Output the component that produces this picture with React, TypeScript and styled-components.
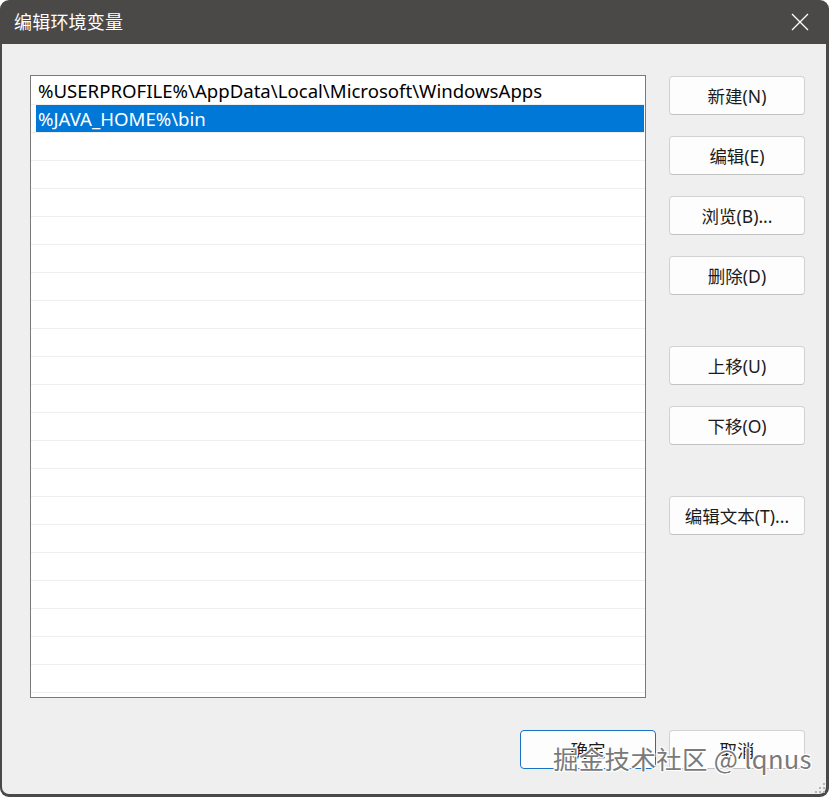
import React from 'react';
import styled, { createGlobalStyle } from 'styled-components';

const GlobalStyle = createGlobalStyle`
  html, body {
    margin: 0;
    padding: 0;
    background: #ffffff;
  }
  * {
    box-sizing: border-box;
  }
`;

const FONT = `"Noto Sans", "Noto Sans CJK SC", sans-serif`;

const paths = ['%USERPROFILE%\\AppData\\Local\\Microsoft\\WindowsApps', '%JAVA_HOME%\\bin'];
const TOTAL_ROWS = 22;

const Window = styled.div`
  position: relative;
  width: 829px;
  height: 797px;
  display: flex;
  flex-direction: column;
  background: #4b4947;
  border-radius: 9px;
  padding: 0 3px 3px 2px;
  overflow: hidden;
  font-family: ${FONT};
`;

const TitleBar = styled.div`
  height: 44px;
  display: flex;
  align-items: center;
  justify-content: space-between;
  padding: 0 17px 0 12px;
  color: #ffffff;
  font-size: 18px;
  flex-shrink: 0;
`;

const Title = styled.span`
  margin-top: -2px;
  letter-spacing: 0.2px;
`;

const CloseIcon = () => (
  <svg width="18" height="18" viewBox="0 0 18 18">
    <path d="M1 1 L17 17 M17 1 L1 17" stroke="#ffffff" strokeWidth="1.3" fill="none" />
  </svg>
);

const Body = styled.div`
  flex: 1;
  background: #efefef;
  border-radius: 0 0 7px 7px;
  display: flex;
  flex-direction: column;
  padding: 31px 21px 25px 28px;
`;

const Main = styled.div`
  display: flex;
  gap: 23px;
`;

const ListBox = styled.div`
  width: 616px;
  height: 623px;
  border: 1px solid #7a7a7a;
  background: #ffffff;
  padding-top: 1px;
  overflow: hidden;
`;

const Row = styled.div`
  height: 28px;
  border-bottom: 1px solid #efefef;
  padding: 0 1px 0 5px;
`;

const Item = styled.div<{ $selected?: boolean }>`
  height: 27px;
  line-height: 28px;
  padding-left: 2px;
  font-size: 18.6px;
  color: ${({ $selected }) => ($selected ? '#ffffff' : '#000000')};
  background: ${({ $selected }) => ($selected ? '#0078d7' : 'transparent')};
  white-space: nowrap;
  overflow: hidden;
`;

const ButtonColumn = styled.div`
  display: flex;
  flex-direction: column;
  padding-top: 1px;
`;

const Button = styled.div<{ $gap?: number; $primary?: boolean }>`
  width: 136px;
  height: 39px;
  margin-top: ${({ $gap }) => $gap ?? 0}px;
  display: flex;
  align-items: center;
  justify-content: center;
  background: #fdfdfd;
  border: 1px solid ${({ $primary }) => ($primary ? '#1a72c4' : '#d2d2d2')};
  border-bottom-color: ${({ $primary }) => ($primary ? '#1a72c4' : '#c2c2c2')};
  border-radius: 4px;
  font-size: 17.5px;
  color: #1b1b1b;
  padding-bottom: 1px;
`;

const Footer = styled.div`
  display: flex;
  justify-content: flex-end;
  gap: 13px;
  margin-top: 32px;
`;

const Grip = styled.svg`
  position: absolute;
  right: 4px;
  bottom: 4px;
`;

const Watermark = styled.div`
  position: absolute;
  left: 553px;
  top: 739px;
  font-family: "Noto Sans CJK SC", "Noto Sans", sans-serif;
  font-size: 25.5px;
  font-weight: 400;
  color: #7a7a7a;
  text-shadow: 1px 1px 0 #ffffff, -1px -1px 0 #ffffff, 1px -1px 0 #ffffff, -1px 1px 0 #ffffff,
    0 1px 0 #ffffff, 0 -1px 0 #ffffff;
  white-space: nowrap;
  pointer-events: none;
  letter-spacing: 0.3px;
`;

const sideButtons: { label: string; gap: number }[] = [
  { label: '新建(N)', gap: 0 },
  { label: '编辑(E)', gap: 21 },
  { label: '浏览(B)...', gap: 21 },
  { label: '删除(D)', gap: 21 },
  { label: '上移(U)', gap: 51 },
  { label: '下移(O)', gap: 21 },
  { label: '编辑文本(T)...', gap: 51 },
];

export default function App() {
  const rows = Array.from({ length: TOTAL_ROWS }, (_, i) => paths[i] ?? '');

  return (
    <>
      <GlobalStyle />
      <Window>
        <TitleBar>
          <Title>编辑环境变量</Title>
          <CloseIcon />
        </TitleBar>
        <Body>
          <Main>
            <ListBox>
              {rows.map((p, i) => (
                <Row key={i}>
                  <Item $selected={i === 1}>{p}</Item>
                </Row>
              ))}
            </ListBox>
            <ButtonColumn>
              {sideButtons.map((b) => (
                <Button key={b.label} $gap={b.gap}>
                  {b.label}
                </Button>
              ))}
            </ButtonColumn>
          </Main>
          <Footer>
            <Button $primary>确定</Button>
            <Button>取消</Button>
          </Footer>
        </Body>
        <Grip width="10" height="10" viewBox="0 0 10 10">
          {[
            [8, 0],
            [8, 4],
            [4, 4],
            [8, 8],
            [4, 8],
            [0, 8],
          ].map(([x, y]) => (
            <rect key={`${x}-${y}`} x={x} y={y} width="2" height="2" fill="#b5b5b5" />
          ))}
        </Grip>
        <Watermark>掘金技术社区 @ lqnus</Watermark>
      </Window>
    </>
  );
}
